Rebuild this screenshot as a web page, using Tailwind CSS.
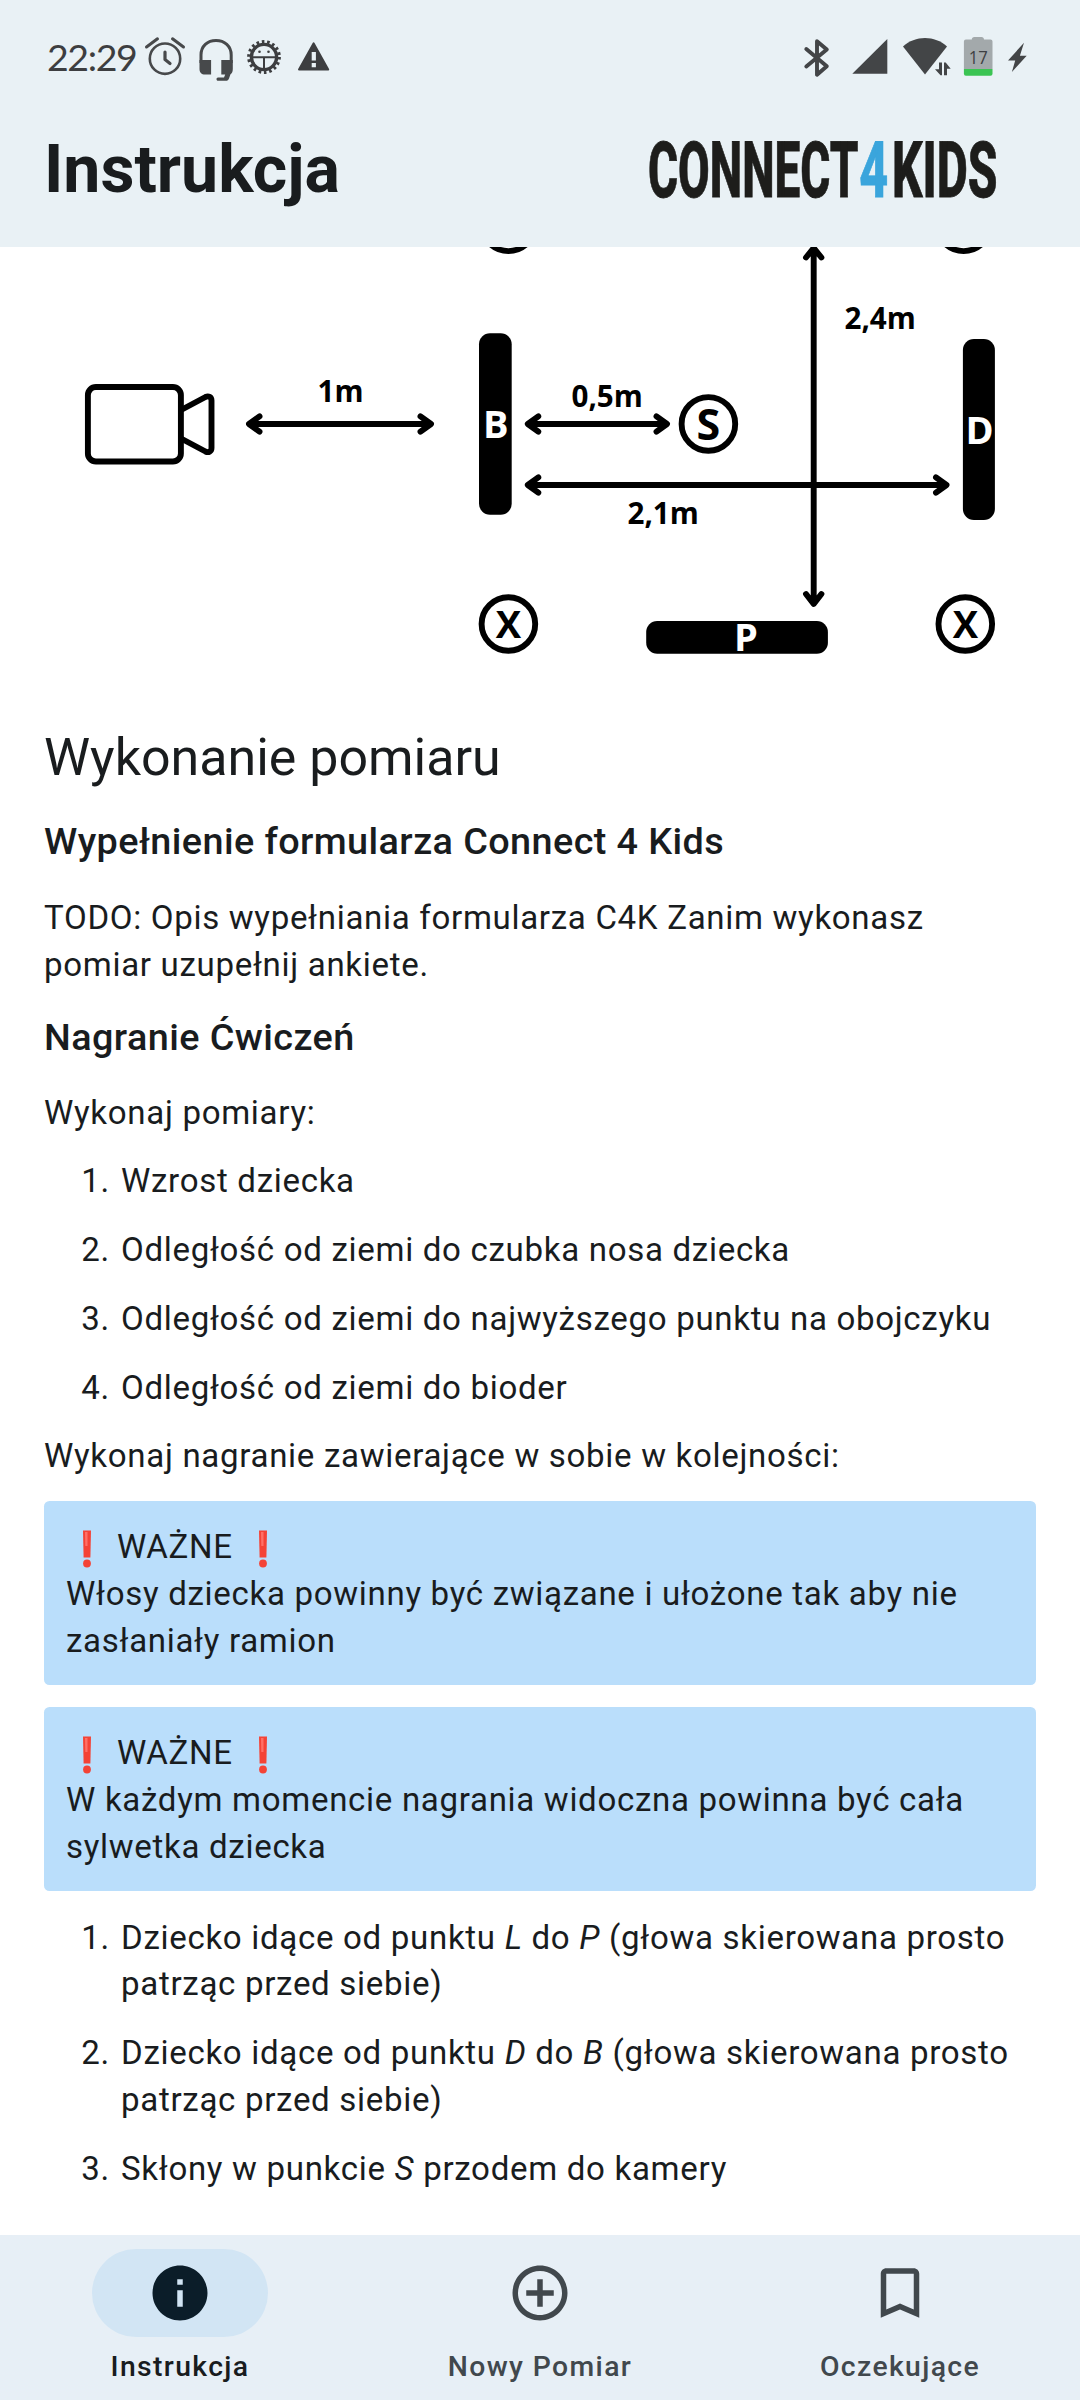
<!DOCTYPE html>
<html lang="pl">
<head>
<meta charset="utf-8">
<title>Instrukcja</title>
<script src="https://cdn.jsdelivr.net/npm/@tailwindcss/browser@4"></script>
</head>
<body class="w-[1080px] h-[2400px] overflow-hidden bg-white flex flex-col font-['Roboto',sans-serif] text-[#191c1e]">

<header class="h-[247px] shrink-0 bg-[#e9f1f5] flex flex-col">
  <div class="h-[114px] flex items-center justify-between">
    <div class="flex items-center">
      <div class="w-[142px] pl-[47px] font-['Lato',sans-serif] text-[37.5px] tracking-[-1.4px] leading-[114px] text-[#3d3e40] whitespace-nowrap">22:29</div>
      <svg class="w-[200px] h-[114px]" viewBox="142 0 200 114" fill="none" stroke="#47494b">
        <circle cx="165" cy="58.7" r="15.2" stroke-width="2.6"/>
        <path d="M165 52v7.5l5 4" stroke-width="3.2" stroke-linecap="round" stroke-linejoin="round"/>
        <path d="M146.500 47l11-8.200M183.500 47l-11-8.200" stroke-width="3" stroke-linecap="round"/>
        <path d="M201 63v-8c0-9 6.500-14.500 15-14.500s15.200 5.500 15.200 14.500v8" stroke-width="3"/>
        <path d="M199.500 60h11.600v14.500h-6.100c-3.500 0-5.500-2-5.500-5.500zM221.300 60h11.500v9c0 3-1 4.500-2.300 5.300l-1.500 4.200c-.6 1.700-1.500 2.300-3.200 2.300h-7.800c-2 0-2-3.300 0-3.300h6l1.200-3h-3.900z" fill="#47494b" stroke="none"/>
        <circle cx="264" cy="57" r="15.300" stroke-width="3.200" stroke-dasharray="2.600 2.740" stroke="#3d3e40"/>
        <circle cx="264" cy="57" r="12.600" stroke-width="3.400" stroke="#3d3e40"/>
        <path d="M252 57.300h24M264 57.300v12" stroke-width="2" stroke="#3d3e40"/>
        <circle cx="259.500" cy="51.700" r="1.300" fill="#3d3e40" stroke="none"/>
        <circle cx="268.500" cy="51.700" r="1.300" fill="#3d3e40" stroke="none"/>
        <path d="M313.600 43.500l14.500 26h-29z" fill="#3d3e40" stroke="#3d3e40" stroke-width="2.200" stroke-linejoin="round"/>
        <path d="M311.700 52h4.200v8.500h-4.200zM311.700 63h4.200v4.200h-4.200z" fill="#e9f1f5" stroke="none"/>
      </svg>
    </div>
    <svg class="w-[290px] h-[114px]" viewBox="790 0 290 114" fill="#434547">
      <path d="M806.300 49l20.500 17.300-9.800 8.500v-33.600l9.800 8.300-20.500 17" fill="none" stroke="#434547" stroke-width="3.900" stroke-linejoin="round" stroke-linecap="round"/>
      <path d="M852.300 73.700h35v-34.700z"/>
      <path d="M925 74.500l-22-28c6-5.600 14-8.500 22-8.500s16 2.900 22 8.500z"/>
      <path d="M943 61v16h-9.500v-10h6v-6z" fill="#e9f1f5"/>
      <path d="M939 62.500h3v12.700h-1.500l-5.500-6h4zM944 75.200v-12.700h1.700l5 6.300h-3.700v6.400z"/>
      <path d="M971.800 39.500c0-1.500 1-2.500 2.500-2.500h7.200c1.500 0 2.500 1 2.500 2.500h6.500a2 2 0 0 1 2 2v27.500h-28.600v-27.500a2 2 0 0 1 2-2z" fill="#a3a9ab"/>
      <path d="M963.900 69h28.600v4.700a2 2 0 0 1-2 2h-24.600a2 2 0 0 1-2-2z" fill="#3bc453"/>
      <text x="978.200" y="64" text-anchor="middle" font-family="Open Sans" font-size="19" textLength="19" lengthAdjust="spacingAndGlyphs" fill="#3d4042">17</text>
      <path d="M1024 42.700l-16 17.800h7.200l-3.300 11.500 14.800-16.300h-6.800z"/>
    </svg>
  </div>
  <div class="flex-1 flex justify-between pl-[44px] pr-[80px]">
    <h1 class="text-[66.2px] leading-[112px] font-bold">Instrukcja</h1>
    <svg class="w-[354px] h-[120px]" viewBox="646 114 354 120" font-family="Roboto" font-weight="800" font-size="77" fill="#1d1d1b" stroke="#1d1d1b" stroke-width="0.8">
      <text x="648" y="197.300" textLength="210.500" lengthAdjust="spacingAndGlyphs">CONNECT</text>
      <text x="859.300" y="197.300" textLength="29" lengthAdjust="spacingAndGlyphs" fill="#3aa5dc" stroke="#3aa5dc">4</text>
      <text x="892" y="197.300" textLength="105.500" lengthAdjust="spacingAndGlyphs">KIDS</text>
    </svg>
  </div>
</header>

<main class="flex-1 min-h-0 overflow-hidden flex flex-col">
  <svg class="w-[1080px] h-[478px] shrink-0" viewBox="0 247 1080 478" font-family="Open Sans" font-weight="700">
    <g fill="none" stroke="#000" stroke-width="5.900" stroke-linejoin="round" stroke-linecap="round">
      <rect x="87.900" y="387" width="93" height="74.500" rx="8"/>
      <path d="M182 409.500l23.500-12.500c3-1.500 6 0 6 3.500v47.500c0 3.500-3 5-6 3.500l-23.500-12.500"/>
      <path d="M250 424h180M259.500 416.300l-10.500 7.700 10.500 7.700M420.500 416.300l10.500 7.700-10.500 7.700"/>
      <path d="M529 424h137M538.300 416.300l-10.500 7.700 10.500 7.700M656.500 416.300l10.500 7.700-10.500 7.700"/>
      <path d="M529 485h417M538.300 477.300l-10.500 7.700 10.500 7.700M936 477.300l10.500 7.700-10.500 7.700"/>
      <path d="M813.700 250v353M806 257.500l7.700-9.500 7.700 9.500M806 594l7.700 10 7.700-10"/>
      <circle cx="708.400" cy="423.900" r="26.800"/>
      <circle cx="508.400" cy="624" r="26.800"/>
      <circle cx="965.300" cy="624" r="26.800"/>
      <circle cx="508.400" cy="224.300" r="26.800"/>
      <circle cx="963.600" cy="224.300" r="26.800"/>
    </g>
    <rect x="479" y="333.300" width="32.700" height="181.400" rx="11"/>
    <rect x="962.900" y="339" width="32" height="181" rx="11"/>
    <rect x="646.200" y="621" width="181.700" height="32.700" rx="11"/>
    <g font-size="29.600">
      <text x="317.500" y="402">1m</text>
      <text x="571.500" y="407.300">0,5m</text>
      <text x="627.500" y="523.700">2,1m</text>
      <text x="844.500" y="329.300">2,4m</text>
    </g>
    <g font-size="38" text-anchor="middle">
      <text x="495.800" y="438" fill="#fff">B</text>
      <text x="979.500" y="443.700" fill="#fff">D</text>
      <text x="746" y="651.300" fill="#fff">P</text>
      <text x="508.400" y="638">X</text>
      <text x="965.400" y="638">X</text>
      <text x="708.400" y="439.500" font-size="43">S</text>
    </g>
  </svg>

  <div class="px-[44px] flex flex-col text-[33.05px] leading-[46.75px] tracking-[0.69px]">
    <h2 class="text-[51.95px] leading-[65.45px] tracking-normal">Wykonanie pomiaru</h2>
    <h3 class="mt-[23px] text-[37.8px] leading-[56.1px] tracking-[0.41px] font-medium">Wypełnienie formularza Connect 4 Kids</h3>
    <p class="mt-[25.5px]">TODO: Opis wypełniania formularza C4K Zanim wykonasz<br>pomiar uzupełnij ankiete.</p>
    <h3 class="mt-[20.5px] text-[37.8px] leading-[56.1px] tracking-[0.41px] font-medium">Nagranie Ćwiczeń</h3>
    <p class="mt-[24.5px]">Wykonaj pomiary:</p>
    <ol class="mt-[22px] flex flex-col gap-[22px]">
      <li class="flex"><span class="w-[66px] text-right mr-[11px]">1.</span><span>Wzrost dziecka</span></li>
      <li class="flex"><span class="w-[66px] text-right mr-[11px]">2.</span><span>Odległość od ziemi do czubka nosa dziecka</span></li>
      <li class="flex"><span class="w-[66px] text-right mr-[11px]">3.</span><span>Odległość od ziemi do najwyższego punktu na obojczyku</span></li>
      <li class="flex"><span class="w-[66px] text-right mr-[11px]">4.</span><span>Odległość od ziemi do bioder</span></li>
    </ol>
    <p class="mt-[22px]">Wykonaj nagranie zawierające w sobie w kolejności:</p>
    <div class="mt-[20.5px] bg-[#badefb] rounded-[5.5px] px-[22px] pt-[23.5px] pb-[20.5px]">
      <p class="flex items-center">
        <svg class="w-[42px] h-[46px]" viewBox="0 0 42 46"><path d="M17 5.500h8l-.6 27h-6.800z" fill="#f44336"/><path d="M19 7h2.500v14h-2.200z" fill="#ff7066"/><circle cx="21" cy="38.500" r="3.900" fill="#f44336"/></svg>
        <span class="w-[134px] pl-[9px]">WAŻNE</span>
        <svg class="w-[42px] h-[46px]" viewBox="0 0 42 46"><path d="M17 5.500h8l-.6 27h-6.800z" fill="#f44336"/><path d="M19 7h2.500v14h-2.200z" fill="#ff7066"/><circle cx="21" cy="38.500" r="3.900" fill="#f44336"/></svg>
      </p>
      <p>Włosy dziecka powinny być związane i ułożone tak aby nie<br>zasłaniały ramion</p>
    </div>
    <div class="mt-[22px] bg-[#badefb] rounded-[5.5px] px-[22px] pt-[23.5px] pb-[20.5px]">
      <p class="flex items-center">
        <svg class="w-[42px] h-[46px]" viewBox="0 0 42 46"><path d="M17 5.500h8l-.6 27h-6.800z" fill="#f44336"/><path d="M19 7h2.500v14h-2.200z" fill="#ff7066"/><circle cx="21" cy="38.500" r="3.900" fill="#f44336"/></svg>
        <span class="w-[134px] pl-[9px]">WAŻNE</span>
        <svg class="w-[42px] h-[46px]" viewBox="0 0 42 46"><path d="M17 5.500h8l-.6 27h-6.800z" fill="#f44336"/><path d="M19 7h2.500v14h-2.200z" fill="#ff7066"/><circle cx="21" cy="38.500" r="3.900" fill="#f44336"/></svg>
      </p>
      <p>W każdym momencie nagrania widoczna powinna być cała<br>sylwetka dziecka</p>
    </div>
    <ol class="mt-[23.5px] flex flex-col gap-[22px]">
      <li class="flex"><span class="w-[66px] text-right mr-[11px]">1.</span><span>Dziecko idące od punktu <i>L</i> do <i>P</i> (głowa skierowana prosto<br>patrząc przed siebie)</span></li>
      <li class="flex"><span class="w-[66px] text-right mr-[11px]">2.</span><span>Dziecko idące od punktu <i>D</i> do <i>B</i> (głowa skierowana prosto<br>patrząc przed siebie)</span></li>
      <li class="flex"><span class="w-[66px] text-right mr-[11px]">3.</span><span>Skłony w punkcie <i>S</i> przodem do kamery</span></li>
    </ol>
  </div>
</main>

<nav class="h-[165px] shrink-0 bg-[#e7eff6] grid grid-cols-3 pt-[14px] text-[28.33px] leading-[37.4px] tracking-[1.375px] font-medium text-[#41484d]">
  <div class="flex flex-col items-center gap-[11px] text-[#191c1e]">
    <div class="w-[176px] h-[88px] rounded-full bg-[#d2e5f4] flex items-center justify-center">
      <svg class="w-[66px] h-[66px]" viewBox="0 0 24 24" fill="#0b1d29"><path d="M12 2C6.480 2 2 6.480 2 12s4.480 10 10 10 10-4.480 10-10S17.520 2 12 2zm1 15h-2v-6h2v6zm0-8h-2V7h2v2z"/></svg>
    </div>
    <span>Instrukcja</span>
  </div>
  <div class="flex flex-col items-center gap-[11px]">
    <div class="w-[176px] h-[88px] flex items-center justify-center">
      <svg class="w-[66px] h-[66px]" viewBox="0 0 24 24" fill="#41484d"><path d="M13 7h-2v4H7v2h4v4h2v-4h4v-2h-4V7zm-1-5C6.480 2 2 6.480 2 12s4.480 10 10 10 10-4.480 10-10S17.520 2 12 2zm0 18c-4.410 0-8-3.590-8-8s3.590-8 8-8 8 3.590 8 8-3.590 8-8 8z"/></svg>
    </div>
    <span>Nowy Pomiar</span>
  </div>
  <div class="flex flex-col items-center gap-[11px]">
    <div class="w-[176px] h-[88px] flex items-center justify-center">
      <svg class="w-[66px] h-[66px]" viewBox="0 0 24 24" fill="#41484d"><path d="M17 3H7c-1.100 0-2 .9-2 2v16l7-3 7 3V5c0-1.100-.9-2-2-2zm0 15l-5-2.180L7 18V5h10v13z"/></svg>
    </div>
    <span>Oczekujące</span>
  </div>
</nav>
</body>
</html>
